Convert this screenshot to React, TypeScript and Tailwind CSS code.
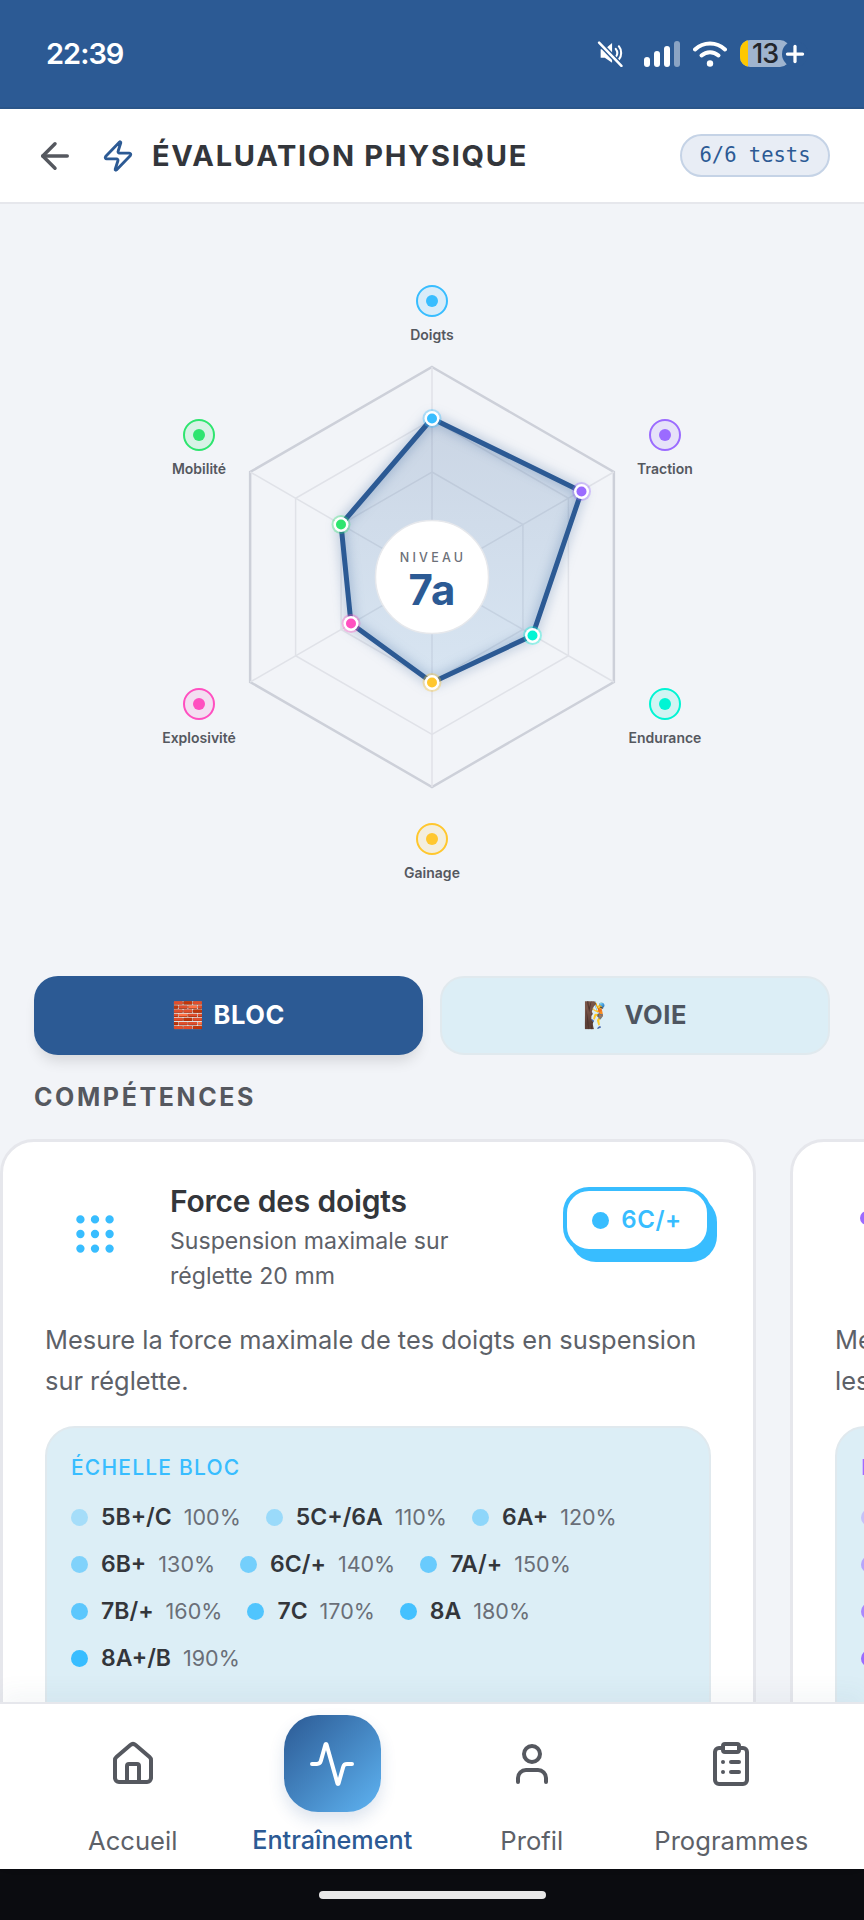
import React from 'react';
import { ArrowLeft, Zap, Grip, House, Activity, User, ClipboardList, Plus } from 'lucide-react';

const center = { x: 432, y: 373 };

const hexPoints = (r: number) =>
  [0, 1, 2, 3, 4, 5]
    .map((i) => {
      const a = (Math.PI / 3) * i;
      return `${center.x + r * Math.sin(a)},${center.y - r * Math.cos(a)}`;
    })
    .join(' ');

const axes = [
  { name: 'Doigts', color: '#38bdff', mx: 432, my: 97, px: 432, py: 214.5 },
  { name: 'Traction', color: '#9b6bff', mx: 665, my: 231, px: 581.5, py: 287.5 },
  { name: 'Endurance', color: '#00f5d4', mx: 665, my: 500, px: 532.5, py: 431.5 },
  { name: 'Gainage', color: '#ffc72e', mx: 432, my: 635, px: 432, py: 478.5 },
  { name: 'Explosivité', color: '#ff4fc0', mx: 199, my: 500, px: 351, py: 419.5 },
  { name: 'Mobilité', color: '#2ee56f', mx: 199, my: 231, px: 341, py: 320.5 },
];

const radarPoints = axes.map((a) => `${a.px},${a.py}`).join(' ');

const blocScale = [
  ['5B+/C', '100%'],
  ['5C+/6A', '110%'],
  ['6A+', '120%'],
  ['6B+', '130%'],
  ['6C/+', '140%'],
  ['7A/+', '150%'],
  ['7B/+', '160%'],
  ['7C', '170%'],
  ['8A', '180%'],
  ['8A+/B', '190%'],
];

const RadarChart = () => (
  <svg width="864" height="772" viewBox="0 0 864 772" className="block">
    <defs>
      <linearGradient id="radarFill" x1="0" y1="0" x2="0" y2="1">
        <stop offset="0%" stopColor="#2c5a94" stopOpacity="0.2" />
        <stop offset="100%" stopColor="#4d94d0" stopOpacity="0.16" />
      </linearGradient>
    </defs>
    {[157.5, 105, 52.5].map((r) => (
      <polygon key={r} points={hexPoints(r)} fill="none" stroke="#e0e2e8" strokeWidth="1.5" />
    ))}
    <polygon points={hexPoints(210)} fill="none" stroke="#cdd0d9" strokeWidth="2.5" />
    {[0, 60, 120].map((deg) => {
      const a = (deg * Math.PI) / 180;
      return (
        <line
          key={deg}
          x1={center.x + 210 * Math.sin(a)}
          y1={center.y - 210 * Math.cos(a)}
          x2={center.x - 210 * Math.sin(a)}
          y2={center.y + 210 * Math.cos(a)}
          stroke="#e0e2e8"
          strokeWidth="1.5"
        />
      );
    })}
    <polygon points={radarPoints} fill="url(#radarFill)" />
    <polygon
      points={radarPoints}
      fill="none"
      stroke="#2c5a94"
      strokeWidth="5"
      strokeLinejoin="round"
      className="drop-shadow-[0_0_6px_rgba(44,90,148,0.5)]"
    />
    {axes.map((a) => (
      <g key={a.name}>
        <circle cx={a.px} cy={a.py} r="9.5" fill={a.color} fillOpacity="0.35" />
        <circle cx={a.px} cy={a.py} r="7.5" fill="#ffffff" />
        <circle cx={a.px} cy={a.py} r="5" fill={a.color} />
        <circle cx={a.mx} cy={a.my} r="15" fill={a.color} fillOpacity="0.13" stroke={a.color} strokeWidth="2" />
        <circle cx={a.mx} cy={a.my} r="6" fill={a.color} />
        <text x={a.mx} y={a.my + 39} textAnchor="middle" fill="#55585f" className="text-[14px] font-semibold">
          {a.name}
        </text>
      </g>
    ))}
    <circle cx={center.x} cy={center.y} r="56.5" fill="#ffffff" stroke="#e6e8ec" strokeWidth="1.5" />
    <text x={center.x + 1} y={center.y - 15} textAnchor="middle" fill="#6c7079" className="text-[12.5px] font-medium tracking-[3.2px]">
      NIVEAU
    </text>
    <text x={center.x} y={center.y + 28} textAnchor="middle" fill="#2c5a94" className="text-[42px] font-bold">
      7a
    </text>
  </svg>
);

const StatusBar = () => (
  <div className="flex h-[107px] items-center bg-[#2c5a94] pl-[46px] text-white">
    <span className="text-[29px] font-semibold tracking-[-1px]">22:39</span>
    <div className="ml-auto mr-[56px] flex items-center">
      <svg width="26" height="27" viewBox="0 0 24 26" fill="none" className="mr-[21px]">
        <path d="M3 9h4l7-6v19l-7-5H3z" fill="#fff" />
        <path d="M17.5 8.5a6.5 6.5 0 0 1 0 8M20.5 6a10.5 10.5 0 0 1 0 13" stroke="#fff" strokeWidth="2" strokeLinecap="round" />
        <path d="M1.5 2.5 23 25" stroke="#2c5a94" strokeWidth="5" />
        <path d="M1.5 2.5 23 25" stroke="#fff" strokeWidth="2.4" strokeLinecap="round" />
      </svg>
      <svg width="36" height="26" viewBox="0 0 36 26" className="mr-[13px]">
        <rect x="0" y="16" width="6" height="10" rx="3" fill="#fff" />
        <rect x="10" y="10" width="6" height="16" rx="3" fill="#fff" />
        <rect x="20" y="5" width="6" height="21" rx="3" fill="#fff" />
        <rect x="30" y="0" width="6" height="26" rx="3" fill="#fff" fillOpacity="0.45" />
      </svg>
      <svg width="34" height="27" viewBox="0 0 34 27" fill="none" className="mr-[13px]">
        <path d="M2 9.5c8.500-8 21.500-8 30 0" stroke="#fff" strokeWidth="4" strokeLinecap="round" />
        <path d="M8.500 15.500c5-4.500 12-4.500 17 0" stroke="#fff" strokeWidth="4" strokeLinecap="round" />
        <circle cx="17" cy="23.500" r="3.200" fill="#fff" />
      </svg>
      <div className="flex items-center">
        <div className="flex h-[27px] w-[50px] items-center overflow-hidden rounded-[10px] bg-[#9fb4cf]">
          <div className="h-full w-[8px] shrink-0 bg-[#ffc800]" />
          <span className="ml-[4px] text-[27px] font-medium leading-none tracking-[-1px] text-[#23262b]">13</span>
        </div>
        <div className="-ml-[8px] rounded-full bg-[#2c5a94]">
          <Plus size={26} strokeWidth={3} className="text-white" />
        </div>
      </div>
    </div>
  </div>
);

const Header = () => (
  <div className="flex h-[97px] items-center border-y-2 border-t-[#2a5589] border-b-[#e6e7ec] bg-white pl-[34px] pr-[34px]">
    <ArrowLeft size={42} strokeWidth={2} className="text-[#55585f]" />
    <Zap size={34} strokeWidth={2} className="ml-[25px] text-[#2c5a94]" />
    <span className="ml-[17px] text-[29px] font-bold leading-none tracking-[1.7px] text-[#33363b]">ÉVALUATION PHYSIQUE</span>
    <div className="ml-auto flex h-[43px] w-[150px] items-center justify-center rounded-[22px] border-2 border-[#c5d3e6] bg-[#e8edf5] font-['DejaVu_Sans_Mono',monospace] text-[20.5px] text-[#2c5a94]">
      6/6 tests
    </div>
  </div>
);

const Tabs = () => (
  <div className="grid grid-cols-[389px_390px] gap-[17px] px-[34px]">
    <div className="flex h-[79px] items-center justify-center gap-[9px] rounded-[24px] bg-[#2c5a94] text-[25.5px] font-bold tracking-[0.6px] text-white shadow-[0_10px_14px_-4px_rgba(0,0,0,0.12)]">
      <span>🧱</span>
      <span>BLOC</span>
    </div>
    <div className="flex h-[79px] items-center justify-center gap-[9px] rounded-[24px] border-2 border-[#e0e9ee] bg-[#dceef6] text-[25.5px] font-bold tracking-[0.6px] text-[#4e5560]">
      <span>🧗</span>
      <span>VOIE</span>
    </div>
  </div>
);

const SkillCard = ({ accent, children, desc }: { accent: string; children: React.ReactNode; desc: React.ReactNode }) => (
  <div className="h-[640px] w-[756px] shrink-0 rounded-[34px] border-[3px] border-[#e6e7ec] bg-white px-[42px] pt-[39px]">
    <div className="flex items-start">
      <div className="flex h-[105px] w-[100px] shrink-0 items-center justify-center">{children}</div>
      <div className="ml-[25px] w-[330px]">
        <div className="text-[30px] font-semibold leading-[40px] tracking-[-0.2px] text-[#33363b]">Force des doigts</div>
        <div className="mt-[3px] text-[23.1px] leading-[35px] text-[#5d6168]">Suspension maximale sur réglette 20 mm</div>
      </div>
      <div className="relative ml-auto mt-[6px] h-[66px] w-[148px] shrink-0">
        <div className="absolute left-[7px] top-[9px] h-[66px] w-[147px] rounded-[26px]" style={{ backgroundColor: accent }} />
        <div
          className="absolute inset-0 flex items-center justify-center gap-[12px] rounded-[26px] border-[4px] bg-white text-[24px] font-semibold tracking-[0.5px]"
          style={{ borderColor: accent, color: accent }}
        >
          <span className="h-[17px] w-[17px] rounded-full" style={{ backgroundColor: accent }} />
          6C/+
        </div>
      </div>
    </div>
    <p className="mt-[25px] text-[25.4px] leading-[41px] text-[#5d6168]">{desc}</p>
    <div className="mt-[25px] h-[400px] rounded-[30px] border-2 border-[#e0e9ee] bg-[#dceef6] px-[24px] pt-[26px]">
      <div className="text-[21px] font-medium leading-[28px] tracking-[1.2px]" style={{ color: accent }}>
        ÉCHELLE BLOC
      </div>
      <div className="mt-[20px] flex flex-wrap gap-x-[25px] gap-y-[17px]">
        {blocScale.map(([grade, pct], i) => (
          <div key={grade} className="flex h-[30px] items-center">
            <span className="h-[17px] w-[17px] rounded-full" style={{ backgroundColor: accent, opacity: 0.33 + i * 0.075 }} />
            <span className="ml-[13px] text-[23px] font-semibold text-[#33363b]">{grade}</span>
            <span className="ml-[12px] text-[21.5px] text-[#6a6f78]">{pct}</span>
          </div>
        ))}
      </div>
    </div>
  </div>
);

const navItems = [
  { label: 'Accueil', Icon: House },
  { label: 'Entraînement', Icon: Activity, active: true },
  { label: 'Profil', Icon: User },
  { label: 'Programmes', Icon: ClipboardList },
];

const BottomNav = () => (
  <div className="relative z-10 grid h-[167px] grid-cols-4 border-t-2 border-[#e6e7ec] bg-white px-[33px] shadow-[0_-10px_22px_rgba(60,90,120,0.05)]">
    {navItems.map(({ label, Icon, active }) => (
      <div key={label} className="flex flex-col items-center pt-[11px]">
        <div
          className={
            active
              ? 'flex h-[97px] w-[97px] items-center justify-center rounded-[34px] bg-gradient-to-br from-[#2c5a94] to-[#5fb4f2] text-white shadow-[0_8px_16px_rgba(44,90,148,0.16)]'
              : 'flex h-[97px] w-[97px] items-center justify-center text-[#55585f]'
          }
        >
          <Icon size={48} strokeWidth={2} />
        </div>
        <span className={active ? 'mt-[10px] text-[25.2px] font-medium text-[#2c5a94]' : 'mt-[10px] text-[25.6px] text-[#5d6168]'}>{label}</span>
      </div>
    ))}
  </div>
);

export default function App() {
  return (
    <div className="flex h-[1920px] w-[864px] flex-col overflow-hidden bg-[#f2f4f8] font-['Inter',sans-serif]">
      <StatusBar />
      <Header />
      <div className="min-h-0 flex-1 overflow-hidden">
        <RadarChart />
        <Tabs />
        <div className="ml-[34px] mt-[25px] text-[25px] font-bold leading-[34px] tracking-[2.6px] text-[#55585f]">COMPÉTENCES</div>
        <div className="mt-[25px] flex gap-[34px]">
          <SkillCard accent="#38bdff" desc="Mesure la force maximale de tes doigts en suspension sur réglette.">
            <Grip size={50} strokeWidth={2} className="text-[#38bdff]" />
          </SkillCard>
          <SkillCard accent="#9b6bff" desc={<>Mesure ta force de traction maximale<br />les bras tendus.</>}>
            <svg width="52" height="52" viewBox="0 0 52 52" className="-mt-[4px]">
              <ellipse cx="8" cy="12" rx="7" ry="7" fill="#9b6bff" />
              <circle cx="7" cy="24" r="2" fill="#9b6bff" />
            </svg>
          </SkillCard>
        </div>
      </div>
      <BottomNav />
      <div className="flex h-[51px] items-start justify-center bg-[#0b0c10] pt-[22px]">
        <div className="h-[8px] w-[227px] rounded-full bg-[#e8e8e8]" />
      </div>
    </div>
  );
}
